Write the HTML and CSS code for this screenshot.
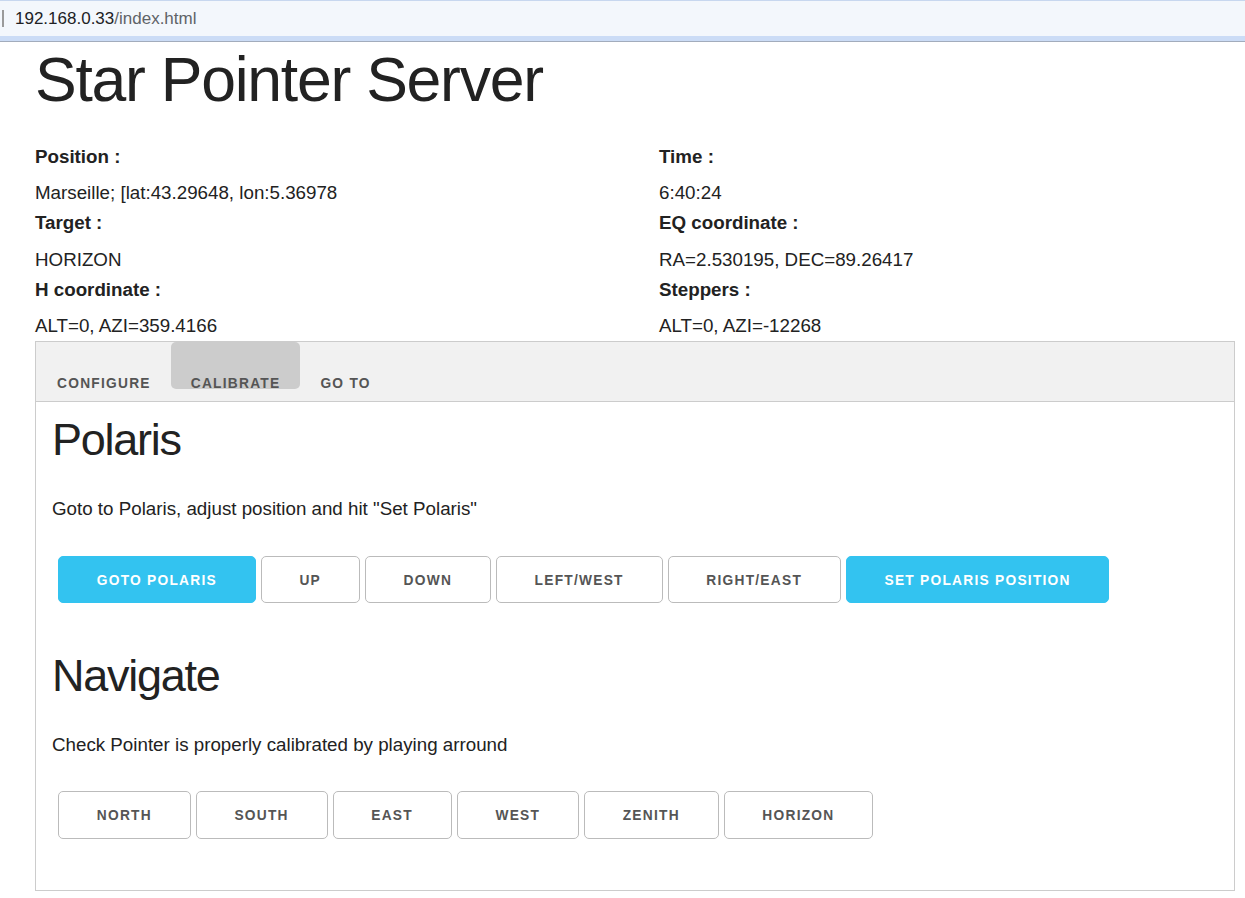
FILE: index.html
```html
<!DOCTYPE html>
<html lang="en">
<head>
<meta charset="utf-8">
<title>Star Pointer Server</title>
<link rel="stylesheet" href="styles.css">
</head>
<body>
<div class="urlbar">
  <span class="caret"></span>
  <span class="url"><span class="host">192.168.0.33</span><span class="path">/index.html</span></span>
</div>
<div class="urlbar-line"></div>

<div class="container">
  <h1 class="title">Star Pointer Server</h1>

  <div class="info">
    <div class="item"><div class="label">Position :</div><div class="value">Marseille; [lat:43.29648, lon:5.36978</div></div>
    <div class="item"><div class="label">Time :</div><div class="value">6:40:24</div></div>
    <div class="item"><div class="label">Target :</div><div class="value">HORIZON</div></div>
    <div class="item"><div class="label">EQ coordinate :</div><div class="value">RA=2.530195, DEC=89.26417</div></div>
    <div class="item"><div class="label">H coordinate :</div><div class="value">ALT=0, AZI=359.4166</div></div>
    <div class="item"><div class="label">Steppers :</div><div class="value">ALT=0, AZI=-12268</div></div>
  </div>

  <div class="tabbox">
    <div class="tabbar">
      <div class="tab">Configure</div>
      <div class="tab active">Calibrate</div>
      <div class="tab">Go To</div>
    </div>
    <div class="tabcontent">
      <h3 class="section-title">Polaris</h3>
      <p class="text">Goto to Polaris, adjust position and hit "Set Polaris"</p>
      <div class="buttons">
        <button class="btn primary">Goto Polaris</button>
        <button class="btn">Up</button>
        <button class="btn">Down</button>
        <button class="btn">Left/West</button>
        <button class="btn">Right/East</button>
        <button class="btn primary">Set Polaris Position</button>
      </div>

      <h3 class="section-title second">Navigate</h3>
      <p class="text">Check Pointer is properly calibrated by playing arround</p>
      <div class="buttons">
        <button class="btn">North</button>
        <button class="btn">South</button>
        <button class="btn">East</button>
        <button class="btn">West</button>
        <button class="btn">Zenith</button>
        <button class="btn">Horizon</button>
      </div>
    </div>
  </div>
</div>
</body>
</html>
```

FILE: styles.css
```css
html, body {
  margin: 0;
  padding: 0;
  background: #fff;
}

body {
  font-family: "Liberation Sans", Arial, sans-serif;
  color: #222;
  font-size: 18.75px;
  line-height: 30px;
}

/* browser address bar */
.urlbar {
  height: 35px;
  border-top: 1px solid #c7d7ef;
  border-bottom: 5px solid #cbdcf6;
  background: #f3f7fc;
  display: flex;
  align-items: center;
}

.urlbar-line {
  height: 1px;
  background: #a2acbc;
}

.caret {
  width: 2px;
  height: 17px;
  margin-left: 2px;
  background: #9a9a9a;
}

.url {
  margin-left: 11px;
  font-size: 17px;
  line-height: 20px;
  margin-top: 1px;
}

.host {
  color: #202124;
}

.path {
  color: #5f6368;
}

/* page */
.container {
  width: 1200px;
  margin-left: 35px;
}

.title {
  margin: 0 0 25px;
  font-size: 62.5px;
  line-height: 75px;
  font-weight: 400;
  letter-spacing: -1.25px;
  color: #222;
}

.info {
  display: grid;
  grid-template-columns: 576px 576px;
  column-gap: 48px;
}

.label {
  font-weight: 700;
  margin-bottom: 6.25px;
}

/* tabs */
.tabbox {
  border: 1px solid #ccc;
}

.tabbar {
  display: flex;
  height: 59px;
  background: #f1f1f1;
  border-bottom: 1px solid #ccc;
  padding-left: 1px;
}

.tab {
  height: 47px;
  box-sizing: border-box;
  padding: 34px 20px 0;
  font-size: 13.75px;
  line-height: 16px;
  font-weight: 700;
  letter-spacing: 1.25px;
  text-transform: uppercase;
  color: #555;
}

.tab.active {
  background: #ccc;
  border-radius: 5px;
}

.tabcontent {
  padding: 9px 16px 32px;
}

.section-title {
  margin: 0 0 25px;
  font-size: 45px;
  line-height: 58.5px;
  font-weight: 400;
  letter-spacing: -1.25px;
  color: #222;
}

.section-title.second {
  margin-top: 43.5px;
}

.text {
  margin: 0 0 31.25px;
}

.buttons {
  display: flex;
  gap: 5px;
  padding-left: 6px;
  margin-bottom: 18.75px;
}

.btn {
  height: 47.5px;
  box-sizing: border-box;
  padding: 2px 37.75px 0;
  border: 1px solid #bbb;
  border-radius: 5px;
  background: transparent;
  color: #555;
  font-family: "Liberation Sans", Arial, sans-serif;
  font-size: 13.75px;
  font-weight: 700;
  line-height: 43.5px;
  letter-spacing: 1.25px;
  text-transform: uppercase;
  white-space: nowrap;
}

.btn.primary {
  background: #33c3f0;
  border-color: #33c3f0;
  color: #fff;
}
```
